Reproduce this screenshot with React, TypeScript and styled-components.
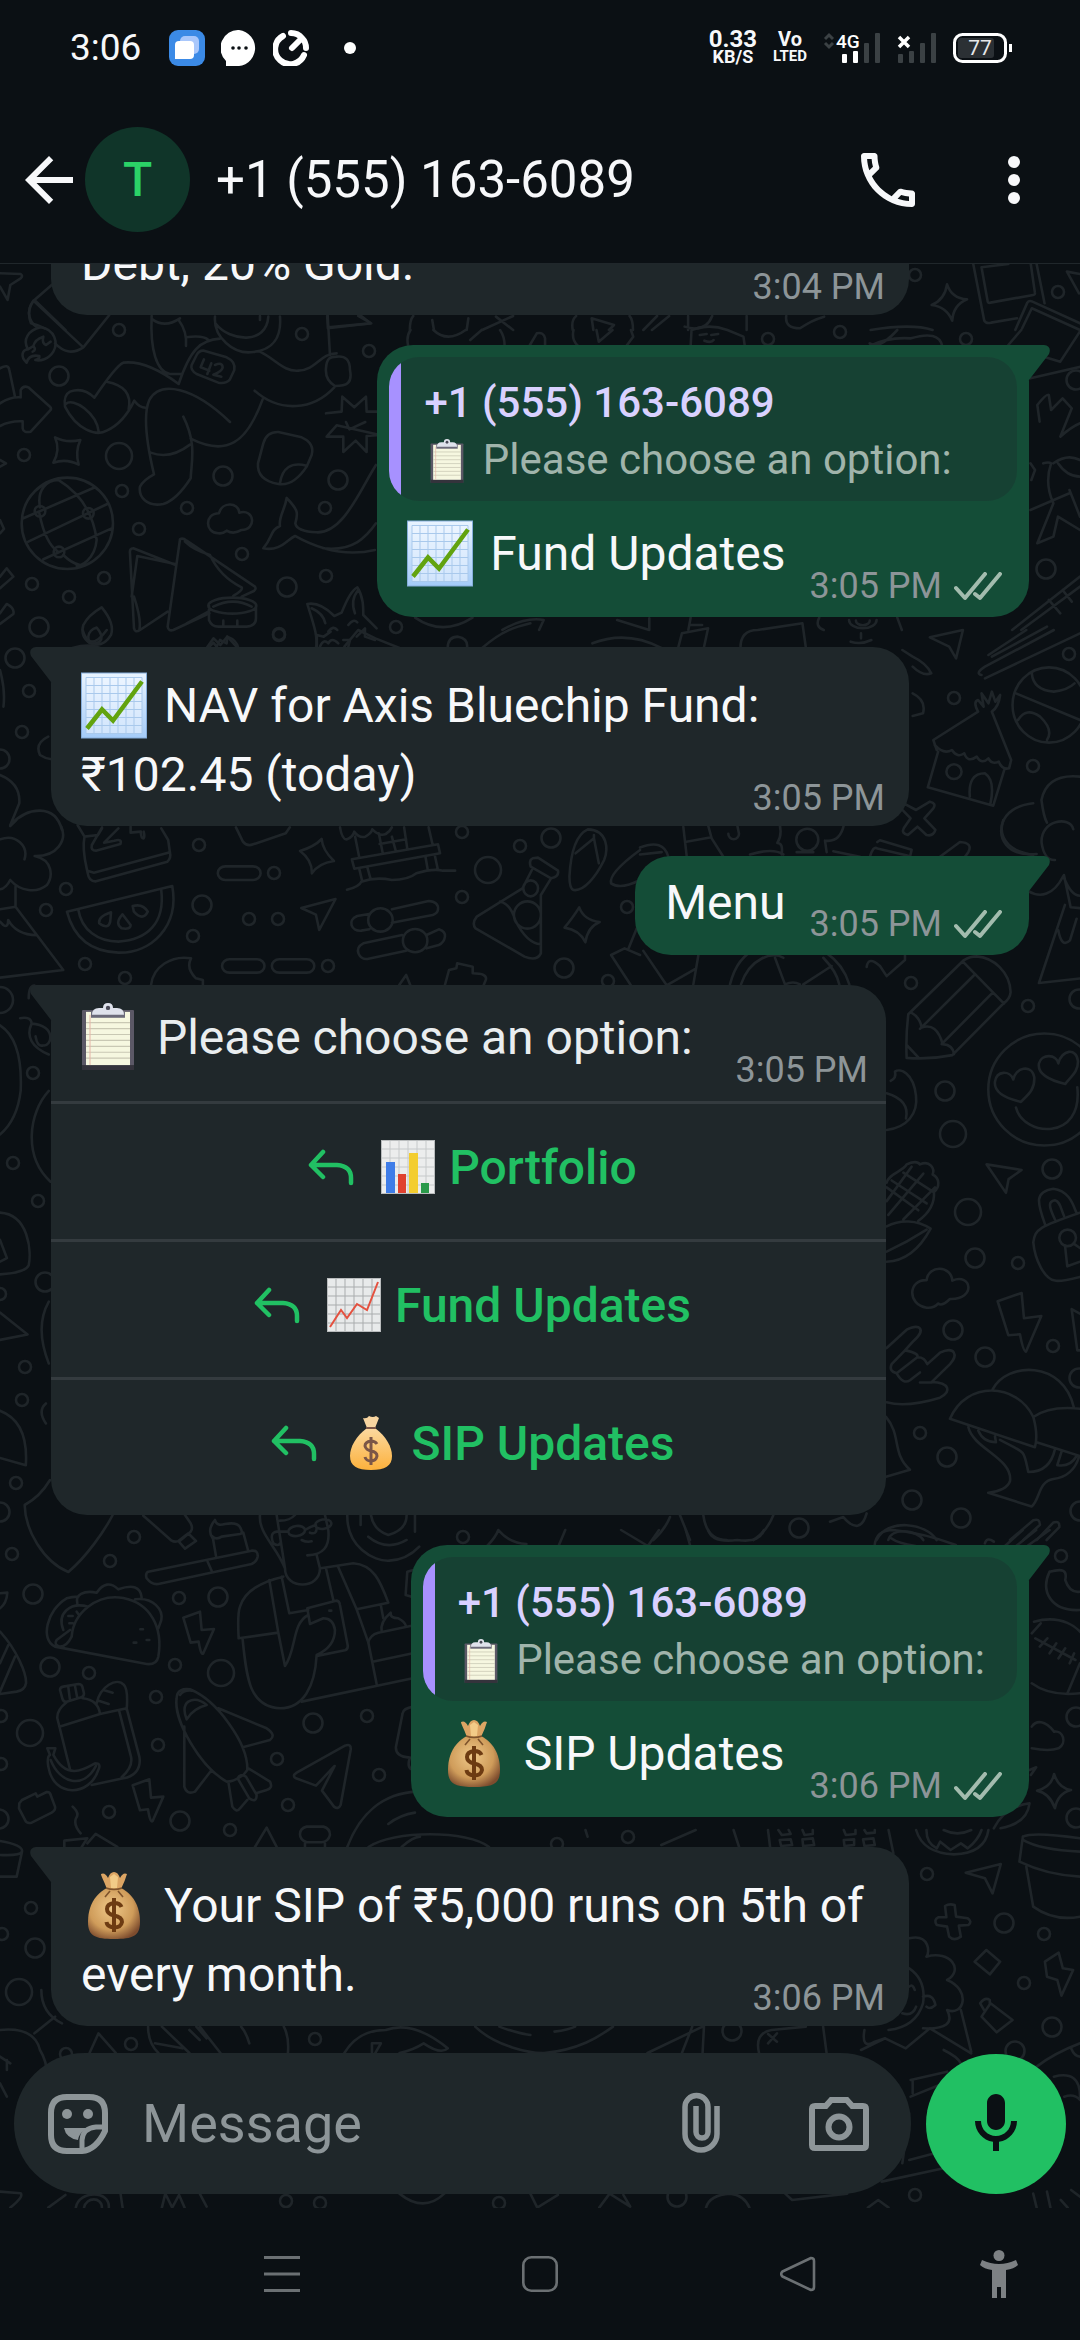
import React from 'react';
import styled, { createGlobalStyle } from 'styled-components';

const color = {
  page: '#0b1014',
  incoming: '#1f272a',
  outgoing: '#144d37',
  quote: '#164133',
  quoteBar: '#a791ff',
  text: '#f7f8fa',
  muted: '#8d9598',
  green: '#21c063',
  line: '#343b3f',
  doodle: '#1f2529',
  nav: '#6b7073',
};

const Global = createGlobalStyle`
  * { box-sizing: border-box; }
  html, body { margin: 0; padding: 0; background: ${color.page}; }
  body { font-family: Roboto, "Noto Sans", sans-serif; color: ${color.text}; }
  button { font: inherit; color: inherit; background: none; border: 0; padding: 0; cursor: pointer; }
  svg { display: block; flex: none; }
`;

const Page = styled.div`
  display: flex;
  flex-direction: column;
  height: 100vh;
  overflow: hidden;
`;

/* ---------- status bar ---------- */

const StatusBar = styled.div`
  display: flex;
  align-items: center;
  justify-content: space-between;
  height: 96px;
  flex: none;
  padding: 0 68px 0 70px;
`;

const StatusGroup = styled.div<{ $gap: number }>`
  display: flex;
  align-items: center;
  gap: ${p => p.$gap}px;
`;

const Clock = styled.time`
  font-size: 37px;
  line-height: 44px;
  margin-right: 12px;
`;

const Stack = styled.div<{ $top: number; $bottom: number }>`
  display: flex;
  flex-direction: column;
  align-items: center;
  font-weight: 700;
  line-height: 17px;
  font-size: ${p => p.$bottom}px;
  & > span:first-child { font-size: ${p => p.$top}px; }
`;

/* ---------- header ---------- */

const Header = styled.header`
  display: flex;
  align-items: center;
  height: 168px;
  flex: none;
  padding: 0 30px 0 13px;
  border-bottom: 1px solid #20272b;
`;

const Avatar = styled.div`
  display: grid;
  place-items: center;
  width: 105px;
  height: 105px;
  border-radius: 50%;
  background: #103529;
  color: #2bd367;
  font-size: 48px;
  font-weight: 500;
`;

const Title = styled.h1`
  flex: 1;
  margin: 0 0 0 26px;
  font-size: 51px;
  line-height: 60px;
  font-weight: 400;
`;

const IconButton = styled.button`
  display: grid;
  place-items: center;
  width: 72px;
  height: 72px;
  flex: none;
`;

const HeaderActions = styled.div`
  display: flex;
  gap: 54px;
`;

/* ---------- conversation ---------- */

const Chat = styled.main`
  position: relative;
  display: flex;
  flex-direction: column;
  flex: 1;
  min-height: 0;
  overflow: hidden;
`;

const Wallpaper = styled.svg`
  position: absolute;
  inset: 0;
  width: 100%;
  height: 100%;
`;

const Messages = styled.div`
  position: relative;
  display: flex;
  flex-direction: column;
  justify-content: flex-end;
  gap: 30px;
  flex: 1;
  min-height: 0;
  overflow: hidden;
  padding: 0 51px 27px;
`;

const Bubble = styled.article<{ $out?: boolean; $wide?: boolean }>`
  position: relative;
  flex: none;
  align-self: ${p => (p.$out ? 'flex-end' : 'flex-start')};
  width: ${p => (p.$wide ? '100%' : 'auto')};
  max-width: calc(100% - 120px);
  border-radius: 36px;
  background: ${p => (p.$out ? color.outgoing : color.incoming)};
`;

const TailShape = styled.svg<{ $out?: boolean }>`
  position: absolute;
  top: 0;
  ${p => (p.$out ? 'right: -21px;' : 'left: -21px; transform: scaleX(-1);')}
`;

const Received = styled.div`
  display: grid;
  padding: 24px 24px 7px 30px;
`;

const Sent = styled.div<{ $tall?: boolean }>`
  display: flex;
  align-items: flex-end;
  justify-content: space-between;
  gap: 24px;
  padding: ${p => (p.$tall ? '18px' : '12px')} 27px 10px 30px;
`;

const Text = styled.p<{ $space: number }>`
  grid-area: 1 / 1;
  margin: 0 0 ${p => p.$space}px;
  font-size: 48px;
  line-height: 69px;
`;

const Meta = styled.div`
  grid-area: 1 / 1;
  align-self: end;
  justify-self: end;
  display: flex;
  align-items: center;
  gap: 12px;
  font-size: 36px;
  line-height: 42px;
  color: ${color.muted};
  white-space: nowrap;
`;

const Emoji = styled.svg<{ $drop: number; $before: number; $after: number }>`
  display: inline-block;
  vertical-align: -${p => p.$drop}px;
  margin: 0 ${p => p.$after}px 0 ${p => p.$before}px;
`;

const Quote = styled.blockquote`
  margin: 12px 12px 0;
  padding: 17px 32px 13px 35px;
  border-radius: 30px;
  background: linear-gradient(to right, ${color.quoteBar} 12px, ${color.quote} 12px);
  font-size: 42px;
  line-height: 57px;
  color: #a0b4ab;
  & > cite { display: block; font-style: normal; font-weight: 500; color: #d9d1ff; }
  & > p { margin: 0; white-space: nowrap; }
`;

const Card = styled(Bubble)`
  width: 100%;
  max-width: calc(100% - 143px);
`;

const CardText = styled.div`
  display: flex;
  align-items: flex-end;
  justify-content: space-between;
  padding: 18px 18px 10px 30px;
  color: #e9edef;
`;

const Option = styled.button`
  display: flex;
  align-items: center;
  justify-content: center;
  gap: 14px;
  width: 100%;
  height: 138px;
  border-top: 3px solid ${color.line};
  padding: 0 0 9px 8px;
  color: ${color.green};
  font-size: 48px;
  font-weight: 500;
  & > svg:first-child { margin-right: 13px; }
`;

/* ---------- composer ---------- */

const Composer = styled.form`
  position: relative;
  display: flex;
  align-items: center;
  gap: 15px;
  padding: 0 14px 14px;
`;

const Field = styled.label`
  display: flex;
  align-items: center;
  flex: 1;
  min-width: 0;
  height: 141px;
  padding: 0 36px 0 28px;
  border-radius: 72px;
  background: ${color.incoming};
  color: ${color.muted};
`;

const FieldInput = styled.input`
  flex: 1;
  min-width: 0;
  margin: 0 0 0 28px;
  padding: 0;
  border: 0;
  outline: 0;
  background: none;
  color: ${color.text};
  font: 400 54px/62px Roboto, "Noto Sans", sans-serif;
  &::placeholder { color: ${color.muted}; opacity: 1; }
`;

const FieldActions = styled.div`
  display: flex;
  gap: 66px;
`;

const MicButton = styled.button`
  display: grid;
  place-items: center;
  width: 140px;
  height: 140px;
  flex: none;
  border-radius: 50%;
  background: ${color.green};
`;

/* ---------- system navigation ---------- */

const SystemNav = styled.nav`
  display: grid;
  grid-template-columns: 1fr 1fr 1fr;
  align-items: center;
  justify-items: center;
  height: 132px;
  flex: none;
  padding: 0 153px;
  position: relative;
`;

const AccessButton = styled.button`
  position: absolute;
  right: 45px;
  top: 30px;
  display: grid;
  place-items: center;
  width: 72px;
  height: 72px;
`;

/* ---------- small drawings ---------- */

const Tail = ({ out }: { out?: boolean }) => (
  <TailShape $out={out} width="57" height="36" viewBox="0 0 57 36" aria-hidden>
    <path d="M0 0H51Q59 1 56 9L36 35H25V12H0Z" fill={out ? color.outgoing : color.incoming} />
  </TailShape>
);

const Checks = () => (
  <svg width="48" height="29" viewBox="0 0 48 29" fill="none" stroke="#a3bcae" strokeWidth="4" strokeLinecap="round" strokeLinejoin="round" role="img" aria-label="Delivered">
    <path d="M2 16L11 26L31 2M21 22L26 26L46 2" />
  </svg>
);

const GreenChart = () => (
  <Emoji $drop={17} $before={0} $after={5} width="66" height="67" viewBox="0 0 66 66" role="img" aria-label="Chart">
    <defs>
      <linearGradient id="sky" x1="0" y1="0" x2="0" y2="1">
        <stop offset="0" stopColor="#e9f4ff" />
        <stop offset="1" stopColor="#a4cbf8" />
      </linearGradient>
    </defs>
    <rect x=".5" y=".5" width="65" height="65" fill="url(#sky)" stroke="#86aedb" />
    <rect x="5" y="5" width="56" height="56" fill="#f2f8ff" opacity=".55" />
    <path d="M5 5H61V61H5ZM13 5V61M21 5V61M29 5V61M37 5V61M45 5V61M53 5V61M5 13H61M5 21H61M5 29H61M5 37H61M5 45H61M5 53H61" fill="none" stroke="#a9c9ec" />
    <path d="M6 56L21 37L32 48L61 9" fill="none" stroke="#62a30f" strokeWidth="4.5" />
  </Emoji>
);

const SackRich = () => (
  <Emoji $drop={17} $before={0} $after={5} width="66" height="67" viewBox="0 0 66 67" role="img" aria-label="Money bag">
    <defs>
      <radialGradient id="sack" cx=".45" cy=".4" r=".65">
        <stop offset="0" stopColor="#efc889" />
        <stop offset=".65" stopColor="#cf9c5a" />
        <stop offset="1" stopColor="#7d4c2e" />
      </radialGradient>
    </defs>
    <path d="M26 17C23 9 20 4 20 2Q24 0 27 6Q29 0 33 0Q37 0 39 6Q42 0 46 2Q44 9 40 17Z" fill="#dca564" />
    <path d="M30 16L29 5L33 2L37 5L36 16Z" fill="#f2cb87" />
    <path d="M26 16H40C55 24 59 38 59 50C59 64 52 67 33 67C14 67 7 64 7 50C7 38 11 24 26 16Z" fill="url(#sack)" />
    <path d="M25 16Q33 19 41 16M29 19L24 25M37 19L42 25" stroke="#7e532c" strokeWidth="1.6" fill="none" />
    <path d="M40.500 35Q39 31 33 31Q26 32 26 37Q26 42 33 43.500Q41 45 41 50Q40 55.500 33 55.500Q26 55 25.500 50M33 26V60" fill="none" stroke="#6d3b12" strokeWidth="4" />
  </Emoji>
);

const Clipboard = ({ large }: { large?: boolean }) => (
  <Emoji $drop={large ? 16 : 9} $before={large ? 0 : 6} $after={large ? 10 : 8} width={large ? 54 : 34} height={large ? 67 : 44} viewBox="0 0 54 68" preserveAspectRatio="none" role="img" aria-label="Clipboard">
    <rect x="1" y="7" width="52" height="61" rx="1" fill="#5b5866" />
    <rect x="1" y="63" width="52" height="5" fill="#34333c" />
    <rect x="5" y="9" width="44" height="54" fill="#f6f7e0" />
    <path d="M5 20H49M5 26H49M5 32H49M5 38H49M5 44H49M5 50H49M5 56H49" stroke="#c9c8b4" strokeWidth="1.2" />
    <path d="M9 12V63" stroke="#e7b3a6" />
    <rect x="10" y="9" width="34" height="6" fill="#6b6a7a" />
    <path d="M11 12Q11 5 18 5H22Q22 0 27 0Q32 0 32 5H36Q43 5 43 12Z" fill="#dfe2ec" />
    <circle cx="27" cy="5" r="2.200" fill="#4a4a58" />
  </Emoji>
);

const ReplyArrow = () => (
  <svg width="46" height="37" viewBox="0 0 46 37" fill="none" stroke={color.green} strokeWidth="4.500" strokeLinecap="round" strokeLinejoin="round" aria-hidden>
    <path d="M15 3L3 16L15 28M3 16H29Q43 17 43 29V34" />
  </svg>
);

const BarChart = () => (
  <svg width="54" height="54" viewBox="0 0 54 54" role="img" aria-label="Bar chart">
    <rect width="54" height="54" fill="#eceded" />
    <path d="M9 0V54M18 0V54M27 0V54M36 0V54M45 0V54M0 9H54M0 18H54M0 27H54M0 36H54M0 45H54" stroke="#c6c9ca" strokeWidth="1" />
    <path d="M5 22H14V54H5Z" fill="#3f7de8" />
    <path d="M17 34H25V54H17Z" fill="#e0412f" />
    <path d="M28 13H37V54H28Z" fill="#f3cd2f" />
    <path d="M40 43H48V54H40Z" fill="#2a9a4a" />
    <rect x=".5" y=".5" width="53" height="53" fill="none" stroke="#b9bcbd" />
  </svg>
);

const LineChart = () => (
  <svg width="54" height="54" viewBox="0 0 54 54" role="img" aria-label="Rising chart">
    <rect width="54" height="54" fill="#e8eaea" />
    <path d="M9 0V54M18 0V54M27 0V54M36 0V54M45 0V54M0 9H54M0 18H54M0 27H54M0 36H54M0 45H54" stroke="#a9acad" strokeWidth="1" />
    <path d="M3 49L14 32L20 40L30 26L40 32L51 4" fill="none" stroke="#e4513f" strokeWidth="2" />
    <rect x=".5" y=".5" width="53" height="53" fill="none" stroke="#b9bcbd" />
  </svg>
);

const SackFlat = () => (
  <svg width="54" height="54" viewBox="0 0 54 54" role="img" aria-label="Money bag">
    <defs>
      <linearGradient id="flat" x1="0" y1="0" x2="0" y2="1">
        <stop offset="0" stopColor="#fbd9a0" />
        <stop offset="1" stopColor="#fcb13c" />
      </linearGradient>
    </defs>
    <path d="M23 12L19 2Q23 3 25 0Q29 2 32 0L35 2L31 12Z" fill="#f7d5a0" />
    <path d="M23 12H31C42 20 48 31 48 40C48 50 41 54 27 54C13 54 6 50 6 40C6 31 12 20 23 12Z" fill="url(#flat)" />
    <path d="M22 12H32" stroke="#7b5647" strokeWidth="2" />
    <path d="M33 28Q31 25 27 25Q21 26 21 30Q22 34 27 35Q33 36 33 40Q32 45 27 45Q22 45 21 41M27 21V49" fill="none" stroke="#7b5647" strokeWidth="3" />
  </svg>
);

/* ---------- wallpaper ---------- */

const smallDots = [
  [119, 330], [302, 334], [369, 351], [24, 455], [122, 491], [187, 508], [139, 529], [325, 508], [242, 554], [326, 576],
  [32, 584], [69, 597], [104, 578], [279, 634], [911, 983], [1028, 1006], [1018, 1263], [1053, 1346], [920, 1433],
  [16, 1483], [12, 1554], [134, 1537], [110, 1561], [179, 1598], [89, 1673], [175, 1665], [156, 1697], [158, 1745],
  [277, 1759], [367, 1716], [379, 1775], [288, 1805], [230, 1830], [109, 1812], [1, 1716], [1, 1764],
  [199, 845], [66, 889], [46, 910], [193, 936], [85, 964], [125, 978], [274, 873], [249, 919], [278, 919], [328, 966],
  [462, 832], [520, 846], [462, 897], [627, 907], [608, 981], [1069, 654], [954, 698], [1033, 766], [29, 691], [22, 732],
  [279, 635], [768, 339], [840, 332], [966, 339], [396, 627], [915, 275], [1058, 292], [31, 1908], [131, 2044], [66, 2054],
  [315, 2039], [557, 1844], [628, 1837], [927, 1874], [1044, 1934], [1024, 1983], [915, 2195], [286, 2201], [320, 2203],
  [499, 2203], [2, 1934], [33, 1073], [13, 1163], [38, 1201], [25, 1367], [22, 1400], [0, 1294], [1061, 1556], [463, 1537],
];
const mediumDots = [
  [59, 376], [223, 476], [338, 480], [287, 587], [39, 627], [945, 1091], [1052, 1169], [975, 1258], [953, 1330], [985, 1357],
  [947, 1457], [912, 1500], [961, 1518], [799, 1528], [1079, 999], [1079, 1378], [1080, 1511], [0, 1512], [33, 1594],
  [218, 1597], [50, 1667], [313, 1723], [180, 1821], [-1, 1819], [202, 905], [551, 838], [564, 968], [15, 658], [0, 759],
  [1076, 380], [1046, 569], [35, 1948], [732, 2031], [1004, 1923], [1052, 2027], [1015, 2051], [677, 2197], [45, 1282],
  [1076, 1717], [1076, 1818],
];
const largeDots = [[119, 456], [953, 1134], [968, 1212], [221, 1673], [30, 1733], [488, 870], [19, 1992], [0, 1000]];

type Sheet = { at: string; paths: string[] };

const sheets: Sheet[] = [
  {
    at: 'translate(0 0) scale(.3444 .3333)',
    paths: [
      'M0 820L60 822Q68 828 60 835L30 855L22 900L0 860M150 855L100 900L190 990M100 900Q75 930 90 970Q110 975 130 985',
      'M1190 990Q1190 960 1200 948M1255 960L1260 990M1360 955L1355 990M1440 950L1490 990M1490 948L1400 990M950 948L952 985L1078 970L1040 948',
    ],
  },
  {
    at: 'translate(540 0) scale(.3444 .3333)',
    paths: [
      'M1182 853Q1195 895 1240 898Q1200 915 1197 962Q1180 920 1137 915Q1175 900 1182 853Z',
      'M1258 792L1290 962Q1295 972 1310 968L1385 955M1282 802L1300 905Q1302 910 1308 908L1432 885Q1438 884 1437 878L1425 792M1282 802L1360 792M1442 792L1465 910M1380 990L1415 908Q1420 900 1430 905L1568 970M1400 985L1428 925L1568 990M1530 815L1568 822M1530 815L1565 880',
      'M95 990Q90 960 105 948M270 990Q270 960 260 948M155 990L150 955L215 975L200 990M300 990L340 948M325 990L375 948M430 990V948M600 990V948M420 980Q480 1000 500 948M715 948Q710 985 755 985Q790 960 825 950M960 990Q1080 970 1140 990',
    ],
  },
  {
    at: 'translate(0 300) scale(.3333)',
    paths: [
      'M100 2L250 142L328 45M100 2C75 35 90 70 112 82M165 130C190 155 215 165 250 142',
      'M80 188C60 170 66 150 84 148C66 118 86 90 122 82C165 88 175 130 160 155C146 178 120 184 106 180Q120 176 118 168C96 164 84 172 80 188ZM84 148L100 138Q110 150 98 155M100 138Q105 118 130 110Q125 130 138 135L152 125',
      'M455 48C450 150 470 215 510 222H545M457 58Q495 85 540 55M536 60Q562 95 558 138M558 112Q610 105 625 120M660 116C600 120 570 150 536 252Q440 180 370 188Q350 195 283 293Q250 260 210 275Q190 285 195 320C230 390 290 410 320 392Q370 370 403 302Q420 325 440 323M320 245Q400 260 386 328M197 312C220 290 290 340 296 395',
      'M462 523C440 430 430 340 448 300C480 240 580 260 690 366M550 350C590 430 575 480 572 535Q530 600 490 612C440 622 415 590 420 560Q430 540 462 523M452 458Q510 480 570 434M572 416C680 470 740 430 788 298M764 272C840 340 940 330 1003 262',
      'M645 50C640 110 700 165 760 156C820 150 845 110 840 50M648 72C690 125 800 135 805 50M780 155C830 180 850 215 895 212C950 210 960 160 1010 160M1010 170Q1050 165 1050 210C1058 250 1040 258 1005 258Q975 240 978 205C980 175 990 170 1010 170M780 48V60',
      'M612 152L680 172Q708 185 703 210L690 238Q678 252 655 248L590 222Q570 210 575 195L590 165Q598 150 612 152ZM612 178L602 202L628 212M634 190L622 222M645 195Q668 185 668 203Q665 215 640 224L664 230',
      'M983 45L990 165M985 82L1112 70L1080 45',
      'M978 340L1025 335L1027 290L1063 322L1098 290L1100 335L1140 335M1140 405L1100 408L1100 456L1067 422L1030 456V410L980 410L1010 376ZM1038 366L1048 388L1096 366',
      'M835 396L905 412Q945 430 935 465L920 500Q880 560 835 552Q770 540 774 490L790 430Q800 395 835 396ZM920 497Q850 480 840 550',
      'M165 412Q200 430 241 420Q225 455 236 494Q200 475 160 488Q182 450 165 412Z',
      'M0 310Q30 290 62 292V270Q70 255 85 262L150 320Q156 326 150 332L92 395Q70 400 68 385V364Q30 362 0 378',
      'M65 670A137 137 0 1 0 339 670A137 137 0 1 0 65 670M120 622C110 570 140 540 175 540C240 580 280 640 290 720C285 780 240 800 230 798M118 640C130 700 150 740 175 756M70 655L285 562M85 725L322 612M130 778L335 685M190 765Q215 790 240 795',
      'M104 634A16 16 0 1 0 136 634A16 16 0 1 0 104 634M249 640A16 16 0 1 0 281 640A16 16 0 1 0 249 640M161 756A16 16 0 1 0 193 756A16 16 0 1 0 161 756',
      'M412 768L395 890M412 768L525 792M527 795L400 745Q388 745 390 760L402 985Q405 1000 420 990L503 935M402 890Q425 960 418 990M540 718Q548 712 560 722L765 860Q770 868 760 874L725 890M540 718L503 980Q505 995 520 990L628 940M555 725Q580 750 630 765Q660 830 725 862Q730 870 700 888M560 970L625 935',
      'M625 917A72 24 0 1 0 769 917A72 24 0 1 0 625 917M627 917V960Q635 980 655 980H740Q768 978 768 955V917M670 962V978M712 962V978M640 920Q700 890 755 920',
      'M655 700C615 700 612 640 657 640C665 605 715 605 718 638C765 625 770 690 725 690Q700 705 680 692Q668 702 655 700Z',
      'M1128 495C1080 570 1030 700 950 697Q890 695 886 670C895 640 895 630 860 594C855 630 835 650 840 678C810 690 820 710 790 745C840 755 860 720 885 708C960 750 1040 770 1125 750M970 745C1060 755 1100 710 1128 670',
      'M948 1044C955 1010 940 970 922 912Q960 905 1003 948L1025 938C1040 900 1055 870 1072 862C1090 890 1090 920 1090 945L1130 985M935 925Q970 940 976 970M1065 940Q1050 900 1075 870M985 995Q1000 975 1012 990M1045 975Q1060 955 1072 967M960 1040Q970 1015 985 1030Q995 1010 1015 1030M1030 1020L1050 1020L1045 1040M1070 1010L1095 985L1095 1010L1125 1020',
      'M305 922Q345 970 333 1005Q310 1045 270 1030Q240 1010 250 975Q265 945 305 922ZM290 983C260 990 255 1030 285 1030C315 1025 305 1000 290 983Z',
      'M0 830L20 805L40 830L0 865M0 940L20 912Q45 925 40 942L0 972M0 205Q25 190 28 210L45 290M0 480L18 490L0 500M0 660L12 687L0 700',
      'M625 1044L640 1028L650 1040L660 1020L680 1030L682 1010Q710 1020 715 1044',
    ],
  },
  {
    at: 'translate(360 330) scale(.4592 .3333)',
    paths: [
      'M105 48Q100 20 110 0M315 48Q315 20 305 0M160 0Q190 40 230 0M240 30L265 0M370 45L385 10Q400 5 403 25V45M465 0Q460 30 475 48M515 0L520 35L550 0M590 0L595 20L580 48',
      'M720 48L722 0Q760 -20 800 0L835 20L838 48M740 15L755 12M765 15L780 12M750 32Q765 40 770 30M1110 48Q1150 20 1200 25Q1260 0 1268 48M1110 40Q1130 60 1170 0M1410 48L1440 0M1525 95L1570 0M1440 60L1525 95M1460 145L1570 110',
      'M1480 275L1475 225Q1495 190 1500 195L1505 240L1530 205L1550 235L1525 320Q1550 290 1568 280M1460 400L1470 420L1462 450M1488 400Q1500 395 1505 400Q1490 460 1510 520L1475 640L1510 620L1520 560L1568 600M1510 400Q1540 370 1568 390M1520 400Q1540 440 1568 440M1545 480L1568 560M1460 540L1545 490',
      'M120 863Q180 920 245 863M310 900Q360 860 400 870L390 900M560 870L630 900V865M1420 900L1568 740M1440 900L1568 770M1500 810L1525 850M1530 780L1550 815M715 900L720 863M720 885H745M1000 863Q990 890 1010 900M1065 870A30 25 0 1 0 1125 870M1080 872A15 14 0 1 0 1110 872M1170 863L1180 900',
    ],
  },
  {
    at: 'translate(0 630) scale(.6888 .3333)',
    paths: [
      'M460 54V15L470 20L480 5M500 50L520 0L545 25L580 54M300 54L310 25L320 45L330 20L345 54M650 54Q650 20 665 20Q680 25 678 54M700 54C730 0 750 -10 770 -20M860 40Q910 0 960 54M985 50L990 10L1028 -5L1022 52M1075 54Q1075 0 1100 0L1165 -20L1170 54M120 0Q130 70 155 0M105 54Q130 40 145 54',
      'M1350 22L1398 0L1388 85L1378 50ZM1435 75L1490 0M1440 80L1520 -10M1425 135Q1415 130 1430 110L1530 0M1430 145L1568 10M1310 60L1325 80Q1345 100 1352 130Q1340 140 1325 110M1325 190Q1345 210 1340 250L1325 258M1235 35Q1250 45 1265 30M1250 25V10',
      'M1470 225A53 113 0 1 0 1576 225A53 113 0 1 0 1470 225M1475 190L1568 270M1498 130Q1500 180 1530 185Q1550 180 1560 160M1478 270Q1490 230 1510 260Q1530 300 1520 330',
      'M1420 245L1355 330L1360 360M1440 245L1468 390L1465 415Q1455 420 1450 395Q1440 405 1435 385Q1425 405 1418 380Q1405 400 1400 370Q1390 385 1382 360Q1370 375 1357 345M1362 365L1347 472L1442 527L1458 420M1408 500Q1405 430 1430 430Q1445 450 1438 520M1420 245Q1412 215 1420 210L1428 230L1425 190L1435 220L1440 185L1445 215L1452 195Q1450 230 1440 245M1374 425A11 22 0 1 0 1396 425A11 22 0 1 0 1374 425',
      'M1312 520L1330 540L1350 515Q1360 520 1355 535L1342 565L1358 600Q1355 620 1345 615L1332 590L1318 615Q1308 610 1312 595L1322 565L1308 535Z',
      'M1568 440Q1520 430 1512 510Q1515 560 1520 578M1500 520C1450 530 1440 620 1475 660Q1485 670 1500 675',
      'M0 435Q30 460 28 520L15 585C40 530 80 520 90 600M70 320Q50 340 58 375Q65 385 75 388M0 120Q8 180 5 230',
    ],
  },
  {
    at: 'translate(0 820) scale(.4082 .3333)',
    paths: [
      'M25 18L40 0M150 20C165 60 140 110 85 108M60 118C70 80 40 40 0 58M85 108C130 120 130 170 115 195C90 220 50 215 25 180Q15 205 0 208M38 200V260L155 450L0 473M0 268L38 260M0 305L8 315Q20 325 20 300Q40 345 90 346',
      'M190 15L207 50C200 90 210 130 215 160Q218 185 235 184L410 125Q420 115 416 95L412 60L395 25M216 153L230 158L412 98M207 50L240 45L250 25M250 22L225 75Q222 92 235 92L295 72Q300 55 280 62L255 68L290 25M320 20V38L345 35Q345 55 352 55Q355 50 352 35',
      'M578 22L595 65Q605 80 620 73L700 40L710 22',
      'M735 93Q770 80 788 57Q790 90 818 123Q780 130 764 160Q765 120 735 93ZM1383 323Q1405 290 1419 262Q1430 300 1469 306Q1440 320 1434 367Q1420 330 1383 323Z',
      'M552 139H620A18 20 0 0 1 620 180H552A18 20 0 0 1 552 139ZM562 418H630A18 20 0 0 1 630 458H562A18 20 0 0 1 562 418ZM684 418H752A18 20 0 0 1 752 458H684A18 20 0 0 1 684 418Z',
      'M164 275L422 198C440 320 370 400 290 398C220 395 180 350 164 275ZM192 270C200 330 240 365 290 365C360 360 405 310 395 210M272 277Q240 290 243 310Q265 330 270 305ZM300 283Q280 310 298 325Q320 330 320 315ZM325 258Q350 250 362 275Q350 305 328 275Z',
      'M738 264L822 237L782 330L774 284Z',
      'M833 22Q838 60 850 58Q865 50 868 35Q880 55 895 50Q910 40 912 28Q930 50 945 42Q955 35 960 22M870 50L880 112M1050 22L1060 75M862 118L1073 73L1078 100L868 146ZM928 40L938 102M960 50L970 95M990 22L998 88M930 72L995 58M880 146L887 182M900 142L908 178M1042 108L1048 150M1065 105L1072 145M850 209Q880 200 885 185Q920 170 960 180Q1000 180 1020 160Q1060 145 1085 152H1115',
      'M904 282L875 288C850 300 860 335 885 332L905 328M960 268L1050 243Q1075 245 1073 268Q1072 280 1060 285L960 308M985 345L890 370C865 385 880 420 900 417L995 392M1045 345L1075 328Q1092 335 1090 350Q1088 368 1075 375L1045 385M902 300A30 35 0 1 0 962 300A30 35 0 1 0 902 300M987 362A30 35 0 1 0 1047 362A30 35 0 1 0 987 362',
      'M1305 115Q1295 120 1300 140L1350 175Q1370 170 1367 152L1318 113ZM1303 150L1280 205L1168 290Q1155 310 1165 325L1285 410Q1315 425 1325 400V225L1350 175M1225 245Q1250 250 1262 300Q1290 370 1325 373M1282 205A18 24 0 1 0 1318 205A18 24 0 1 0 1282 205M1259 285A33 41 0 1 0 1325 285A33 41 0 1 0 1259 285',
      'M1395 170Q1400 50 1440 28C1490 30 1490 90 1480 120C1460 170 1430 215 1405 210Q1395 205 1395 170M1410 100L1455 55L1467 130M1455 45V60M1568 90Q1490 160 1497 190Q1520 210 1568 180',
      'M370 495C375 440 420 405 468 415Q455 445 480 475L497 480V495M978 495L995 465L1005 495M1090 495L1100 450L1118 445L1120 430L1158 440V460Q1195 460 1190 480L1185 495M1568 405L1530 385L1497 405L1545 495M1540 385L1560 325',
    ],
  },
  {
    at: 'translate(640 820) scale(.3333 .4592)',
    paths: [
      'M805 423L972 305Q990 297 1010 297C1060 300 1110 330 1112 375Q1110 390 1090 400L937 512Q870 522 800 518Q797 470 805 423ZM968 308L1092 400M1005 336L840 455M1058 376L905 488M815 420Q840 430 845 452Q890 440 908 488Q940 490 942 510M800 490L835 517',
      'M1045 587A168 122 0 1 0 1381 587A168 122 0 1 0 1045 587M1143 614Q1060 600 1065 570C1070 545 1110 545 1120 565C1125 540 1175 530 1183 560C1185 590 1160 600 1143 614ZM1276 575Q1190 560 1197 530C1205 508 1250 510 1255 530C1265 500 1310 495 1314 525C1315 550 1290 560 1276 575ZM1128 626C1150 690 1330 700 1312 582',
      'M1040 750L1145 762L1106 782L1098 812Z',
      'M1180 920C1185 890 1200 885 1320 855M1180 920C1185 960 1215 1000 1245 1003Q1260 1006 1320 995M1215 880C1190 830 1185 810 1240 803C1290 808 1300 840 1310 856M1245 870C1225 840 1225 830 1245 828C1260 830 1262 845 1272 862M1258 910A25 18 0 1 0 1308 910A25 18 0 1 0 1258 910M1275 926L1282 972L1320 962M1300 922L1320 932',
      'M740 790C745 770 790 765 800 750Q830 740 840 750C870 740 885 760 878 772C900 780 900 800 882 810C885 840 860 860 835 873M740 800L835 850M755 785L860 835M790 768L880 810M745 860L850 770M740 830L815 755M790 870L885 800M740 885C780 870 830 870 872 890Q820 960 740 962M740 940Q800 920 860 892',
      'M740 675C800 670 835 640 828 600C820 550 780 540 765 548Q770 562 752 568M740 595Q810 610 798 650',
      'M860 1062C800 1055 805 1000 860 1002C865 968 935 970 937 1003C995 985 1010 1045 930 1043Q905 1060 895 1053Q880 1064 860 1062Z',
      'M1073 1048L1145 1030L1152 1085L1204 1080L1158 1158Q1150 1158 1140 1120L1105 1122ZM1320 1075L1295 1065L1312 1155L1320 1155',
      'M740 1150L800 1110C840 1095 860 1110 820 1135L795 1155C830 1160 835 1165 832 1170C850 1170 855 1175 862 1185L900 1160C945 1145 955 1165 930 1185L875 1224C930 1225 935 1245 900 1258Q800 1280 740 1268M795 1155L755 1185Q745 1200 770 1205L832 1170M770 1205Q790 1230 810 1220L840 1203M840 1225H875',
      'M930 1304C980 1220 1130 1225 1180 1300Q1195 1340 1185 1366L930 1304ZM1058 1240C1100 1180 1270 1175 1302 1280M1180 1300Q1230 1275 1320 1282M1190 1355L1320 1385M985 1322C1000 1370 1120 1390 1110 1440Q1100 1460 1045 1465L1175 1495C1200 1480 1195 1440 1240 1435Q1300 1430 1318 1385M1015 1330Q1030 1355 1068 1355L1065 1342M1080 1350C1160 1380 1150 1370 1165 1420Q1230 1420 1245 1370M1265 1375L1252 1405Q1290 1410 1310 1385',
      'M738 1300C785 1340 755 1380 810 1415L738 1430',
      'M710 1568C740 1520 860 1530 890 1568M745 1568C755 1540 830 1545 850 1568M1110 1568L1180 1525Q1200 1520 1200 1535L1150 1568M1190 1568L1240 1530Q1260 1525 1258 1540L1220 1568M570 1528L610 1518Q660 1560 680 1510M190 1514Q200 1568 260 1568M400 1514Q380 1550 340 1568M120 1514L150 1568M90 1518Q75 1545 40 1568',
      'M1090 0C1070 40 1100 80 1190 74M1205 50C1200 0 1290 -10 1300 20M1205 50C1210 75 1225 88 1245 87M1165 155C1200 170 1240 165 1270 122C1290 160 1310 165 1320 165M1272 120L1292 190L1320 192M1275 185L1197 355L1320 345M1255 240Q1265 280 1290 262L1310 215',
      'M712 48L720 44L815 65L810 80M712 62L805 78M690 80Q700 55 712 62M900 80L960 48Q1000 50 985 70L975 80M0 60Q70 40 85 80M0 75L65 70M130 15L140 78M200 0L215 40L250 80M135 48L210 38M330 75Q400 60 430 75M469 43A33 24 0 1 0 535 43A33 24 0 1 0 469 43M415 0Q430 30 412 50Q430 50 425 75M612 10Q600 50 555 45L560 70M470 70H520M580 68L660 80M265 30A16 12 0 1 0 297 30L290 5',
      'M270 358C300 270 400 260 450 290M303 358C330 300 400 285 430 300M405 300L435 358M490 358L575 318M560 290Q610 315 628 358M550 300Q590 330 598 358M10 285L80 360L165 325M175 295L160 358M680 320Q685 295 720 318L740 340L795 305V295M435 358Q460 350 480 358',
    ],
  },
  {
    at: 'translate(0 960) scale(.574 .3635)',
    paths: [
      'M35 160Q55 155 55 175C100 180 90 240 75 235Q65 240 62 210M55 175C45 210 55 240 85 260M85 360C50 420 40 540 88 610M0 180Q40 220 36 360Q30 440 0 480M0 695C50 700 55 800 50 840Q45 860 0 865M0 770L12 820L0 830M0 970L48 1030L0 1045M85 940Q60 1010 85 1110M80 1220Q65 1240 80 1275M0 1240Q50 1270 45 1390L0 1370M50 105Q50 70 60 70',
    ],
  },
  {
    at: 'translate(0 1480) scale(.3333)',
    paths: [
      'M150 0Q120 50 74 75C75 150 130 245 205 276C260 230 315 150 338 105',
      'M430 107L515 182Q525 188 540 182L572 155Q580 145 572 130L555 105M535 183L565 160L588 183L555 206Z',
      'M445 275L755 212Q775 210 773 230Q770 245 755 252L475 312Q455 315 440 295Q435 280 445 275ZM623 245L635 272M648 228L638 170M744 210L730 158M638 175Q620 150 645 120Q650 140 675 132Q715 125 722 145Q730 160 720 162L665 170Q650 180 638 170',
      'M165 500C120 480 140 390 200 355Q215 350 235 350M165 500L440 552Q470 555 475 530C490 440 450 370 370 354C290 340 220 400 215 470Q200 500 180 500Q160 495 170 480L210 450M232 370C225 345 250 330 290 338Q320 295 355 328Q420 305 425 352M405 358C460 350 490 390 484 420L475 445M190 450C170 400 210 365 265 380M205 408H218M208 430H218M230 395L235 402',
      'M421 448H429M440 480H448M401 488H409M988 392H994',
      'M550 413L600 395L605 450L642 447L610 520Q603 528 596 485L572 488ZM398 916L448 898L453 953L490 950L458 1023Q451 1031 444 988L420 991Z',
      'M180 630Q180 622 190 620L235 612Q245 612 247 620L252 640Q252 650 244 652L200 665Q190 667 187 655ZM205 622L210 660M225 618L232 655M200 667Q170 690 172 715L210 868M248 655Q295 660 300 702L178 740M290 670C300 620 350 590 372 615Q385 630 380 690M300 702L380 685L418 830C425 870 400 890 370 895L275 915M358 695L393 830Q400 860 365 892M310 630L338 638M296 662L326 672',
      'M142 805H166L160 825C200 900 250 870 285 850Q305 850 295 870C270 950 160 955 145 860Q140 830 150 825ZM152 840C180 910 250 930 288 858',
      'M530 655C530 630 550 625 570 628C650 660 745 790 742 870L730 885C700 905 690 905 680 905C600 860 520 720 530 655ZM560 718Q545 680 565 665Q590 650 620 675Q580 685 560 718M655 685L800 745Q830 765 810 780L728 802M553 740V920Q560 945 585 935L635 870M685 905L697 980Q710 1000 720 985L742 960M745 865L810 905Q820 925 800 930L768 940M713 895L748 955Q770 970 770 945L738 890Q720 880 713 895M540 645Q550 630 575 632',
      'M890 878L1035 797Q1055 790 1052 810L1022 975Q1015 990 1002 980L966 932L1004 858L948 917L888 895Q875 888 890 878Z',
      'M780 105C775 160 830 200 855 265M830 105L855 265C855 330 960 330 960 265L950 225M975 105L985 150C990 200 970 225 922 226M840 190Q835 200 820 190C810 165 815 150 850 155L865 155M915 150Q930 140 948 135M905 180Q920 188 935 184M930 158Q950 165 950 145M865 156A25 15 -8 1 0 915 150A25 15 -8 1 0 865 156M946 136A24 14 -8 1 0 994 129A24 14 -8 1 0 946 136M840 122Q870 122 885 105',
      'M850 290Q740 315 720 380Q712 400 716 475L835 458M808 300L835 458L855 558C890 510 875 430 925 405M845 290L868 400L925 390M962 265L1060 250C1120 255 1140 300 1165 368L1070 388L1015 262M978 265L1000 360M1070 388L1105 487M1143 378L1150 415M728 478C740 600 750 680 840 685C910 685 945 620 950 525Q1005 500 1005 450Q1000 415 970 415L930 432L922 385L1008 362Q1018 362 1020 375L1043 495Q1045 508 1035 511L955 527',
      'M905 665L1260 590M1105 487L1130 612M1105 487Q1110 465 1135 458L1260 432M1118 545L1260 515M1145 455Q1140 425 1172 398Q1170 415 1195 415Q1215 425 1218 438',
      'M1042 105C1040 200 1120 245 1168 242Q1220 240 1258 200M1082 105V135M1105 170Q1160 215 1220 180M1113 105Q1120 150 1165 165Q1220 150 1220 105M1245 105V155',
      'M1240 270L1222 275L1217 345L1240 352M1240 680Q1210 685 1208 700L1188 800Q1185 830 1230 833Q1220 860 1235 868M1042 1101C1080 1000 1150 940 1250 935M1165 1032Q1200 1005 1245 998M1205 1101Q1240 1070 1260 1070',
      'M0 455C50 510 80 580 78 610Q75 630 50 635L0 642M0 550L25 495M0 635L45 530M0 340L22 338Q20 370 0 385',
      'M58 970L66 960L107 940L112 950L140 936Q150 935 152 945L165 980Q168 990 155 998L95 1028Q80 1032 75 1020L57 985Z',
      'M218 980Q240 1000 228 1015Q220 1035 242 1060M193 1101V1082L262 1075L245 1101M262 1090L287 1062L352 1101M765 1101L800 1043L830 1101M920 1040H970Q990 1045 990 1065Q985 1085 965 1087H920Q900 1080 900 1063Q900 1045 920 1040M915 1090V1101M975 1090V1101M0 1083Q70 1095 66 1115L50 1190H0M0 1125Q60 1128 66 1115',
    ],
  },
  {
    at: 'translate(380 1530) scale(.4464 .3333)',
    paths: [
      'M240 48Q260 20 265 0Q290 40 328 42M400 48L415 0M540 0L600 48L625 0M695 48L685 0M735 0Q745 40 800 30Q850 40 860 0M1108 48Q1110 0 1150 0Q1220 10 1290 45M1145 25Q1160 40 1200 48M1355 40Q1360 20 1375 35M1400 48L1440 0M1425 48L1470 0M1450 48L1500 0',
      'M1500 125C1480 180 1500 245 1568 240M1500 125C1530 115 1540 120 1535 150Q1545 190 1568 185',
      'M1465 275C1520 255 1568 280 1590 350M1460 460Q1500 500 1568 490M1468 325L1558 390M1478 350L1495 325M1500 370L1515 340M1520 385L1535 355M1545 400L1555 370M1540 490L1568 400M1460 310L1480 280',
      'M1460 655Q1500 665 1520 655C1540 640 1530 600 1510 605C1490 570 1470 570 1460 590',
      'M1510 732Q1520 775 1548 780Q1518 790 1512 835Q1500 790 1472 782Q1505 770 1510 732Z',
      'M1375 895Q1400 830 1455 820Q1450 880 1390 895M1455 720L1470 712L1458 735',
    ],
  },
  {
    at: 'translate(0 1830) scale(.6888 .3333)',
    paths: [
      'M535 51C570 0 680 0 710 51M850 0L853 20M1010 0L960 45M1065 0L1073 51M1115 0L1118 51M1290 0L1297 70M1130 0L1135 15L1148 12L1145 0M1165 0L1168 15L1180 12V0M1132 30L1148 28L1150 45L1134 48ZM1165 28L1180 25L1182 45L1166 48ZM1225 0L1228 15L1242 12V0M1255 0L1258 10L1270 8V0M1225 30L1240 28V45L1226 48ZM1253 28L1268 25L1270 45L1255 48ZM1330 0Q1340 70 1385 73Q1430 70 1435 0M1345 0Q1345 40 1360 55L1365 35L1380 60L1395 40L1405 55Q1420 30 1425 0M1370 0Q1390 20 1410 0',
      'M1485 20Q1500 5 1568 25M1485 20L1480 95Q1520 135 1568 140M1490 110L1500 230Q1530 275 1568 260M1485 30Q1510 60 1568 65',
      'M1402 128L1453 102L1441 190L1430 145Z',
      'M1372 228Q1378 220 1386 225L1388 260L1405 265Q1412 275 1406 285L1392 287L1395 320Q1385 335 1378 320L1375 290L1360 285Q1355 270 1362 262L1374 262Z',
      'M1432 360L1452 395L1437 433L1415 395ZM1438 520L1470 570L1447 607L1425 560ZM1430 545L1423 520Q1430 500 1437 510V520',
      'M1517 395L1537 368L1543 415L1558 420L1541 497L1535 450L1520 440Z',
      'M1320 325C1350 310 1350 370 1345 380C1380 360 1400 420 1375 450C1410 480 1400 560 1375 540Q1390 600 1340 595M1320 415Q1345 450 1340 520Q1330 590 1290 600M1340 500Q1355 490 1358 525Q1350 540 1345 530M1320 470Q1325 460 1328 480M1310 550Q1325 560 1330 530M1395 540L1410 665M1255 600Q1250 660 1270 635L1285 625L1315 655L1350 595L1410 670M1250 660L1285 625M1370 660Q1390 680 1395 700M1505 710Q1530 670 1568 640M1555 655Q1560 680 1568 680',
      'M0 600Q50 590 58 660Q70 700 68 750M0 680L15 700M10 690V720M0 760L10 800M60 480Q60 550 90 580M50 610L80 560',
      'M215 590Q215 640 230 669M235 590L275 669M225 640L265 655M275 600L290 630M285 590L300 625M130 669L143 610L168 669M290 590L320 669M350 590Q358 610 362 640M418 669Q420 620 412 590M500 669Q520 600 560 600Q600 570 650 655Q640 675 615 640Q600 660 580 669M540 669V640H553L545 669M690 590C720 650 770 670 790 669C840 660 870 620 890 590M725 590Q750 610 770 615M805 605Q825 600 835 590M940 669L1020 590M990 669L1005 590M1020 669L1022 590M1102 669Q1095 610 1120 600L1170 590M1195 590L1200 669M1115 612L1128 635M1128 610L1115 640',
      'M1322 750L1375 725M1322 800L1370 760M1325 750V790M1320 990L1375 960M1280 1055L1370 1015M1320 850L1310 1000M1530 740Q1568 720 1568 800M1545 800Q1560 790 1568 810',
      'M0 1085L30 1090Q35 1100 15 1133M70 1133L95 1095M110 1133C115 1080 160 1080 158 1133M122 1133C125 1100 148 1100 148 1133M175 1091L178 1133M235 1133L240 1091L250 1133L260 1095L268 1133M290 1091L300 1130M580 1091Q615 1150 645 1091M770 1091L780 1133L810 1095M870 1133L885 1091L915 1130L905 1095M1025 1133Q1030 1095 1060 1091Q1080 1095 1088 1133M1140 1091L1150 1110L1230 1091M1260 1133L1275 1110L1290 1133M1500 1091L1505 1133M1520 1085L1525 1133M1540 1110L1550 1133M1555 1080L1568 1100',
    ],
  },
];

const Doodles = () => (
  <Wallpaper viewBox="0 264 1080 1944" preserveAspectRatio="xMidYMin slice" fill="none" stroke={color.doodle} strokeWidth="2.600" strokeLinecap="round" strokeLinejoin="round" aria-hidden>
    {sheets.map(s => (
      <g key={s.at} transform={s.at}>
        {s.paths.map(d => <path key={d} d={d} vectorEffect="non-scaling-stroke" />)}
      </g>
    ))}
    {smallDots.map(([x, y]) => <circle key={`s${x}-${y}`} cx={x} cy={y} r="6" />)}
    {mediumDots.map(([x, y]) => <circle key={`m${x}-${y}`} cx={x} cy={y} r="9.500" />)}
    {largeDots.map(([x, y]) => <circle key={`l${x}-${y}`} cx={x} cy={y} r="13" />)}
  </Wallpaper>
);

const PhoneStatus = () => (
  <StatusBar>
    <StatusGroup $gap={16}>
      <Clock>3:06</Clock>
      <svg width="36" height="36" viewBox="0 0 36 36" aria-hidden>
        <rect width="36" height="36" rx="9" fill="#3b8ae6" />
        <rect x="11" y="6" width="19" height="18" rx="5" fill="#a9c7fb" />
        <path d="M6 15Q6 11 10 11H21Q25 11 25 15V25Q25 29 21 29H6Z" fill="#fff" />
      </svg>
      <svg width="36" height="36" viewBox="0 0 36 36" aria-hidden>
        <path d="M18 0A18 18 0 1 1 14 36H5V31A18 18 0 0 1 18 0Z" fill="#fff" />
        <circle cx="12" cy="18" r="1.800" fill="#0b1014" /><circle cx="18" cy="18" r="1.800" fill="#0b1014" /><circle cx="25" cy="18" r="1.800" fill="#0b1014" />
      </svg>
      <svg width="36" height="36" viewBox="0 0 36 36" fill="none" stroke="#fff" strokeWidth="6" strokeLinecap="round" aria-hidden>
        <path d="M10 6A15 15 0 1 0 31 25" />
        <path d="M18 3Q25 3 29 8Q33 12 33 18M19 18L28 9" />
      </svg>
      <svg width="64" height="12" viewBox="0 0 64 12" aria-hidden>
        <circle cx="25" cy="6" r="6" fill="#fff" />
      </svg>
    </StatusGroup>
    <StatusGroup $gap={16}>
      <Stack $top={24} $bottom={18}><span>0.33</span><span>KB/S</span></Stack>
      <Stack $top={20} $bottom={15}><span>Vo</span><span>LTED</span></Stack>
      <svg width="58" height="40" viewBox="0 -4 58 40" aria-label="4G signal" role="img">
        <path d="M2 7L6 3L10 7M2 11L6 15L10 11" fill="none" stroke="#3b4144" strokeWidth="3" />
        <text x="13" y="16" fill="#fff" fontFamily="Roboto" fontWeight="500" fontSize="19">4G</text>
        <rect x="19" y="22" width="5" height="9" rx="1" fill="#fff" />
        <rect x="30" y="19" width="5" height="12" rx="1" fill="#fff" />
        <rect x="41" y="11" width="5" height="20" rx="1" fill="#3b4144" />
        <rect x="52" y="1" width="5" height="30" rx="1" fill="#3b4144" />
      </svg>
      <svg width="40" height="32" viewBox="0 0 40 32" aria-label="No signal" role="img">
        <path d="M2 5L12 15M12 5L2 15" fill="none" stroke="#fff" strokeWidth="3.500" />
        <rect x="1" y="22" width="5" height="9" rx="1" fill="#3b4144" />
        <rect x="12" y="19" width="5" height="12" rx="1" fill="#3b4144" />
        <rect x="23" y="11" width="5" height="20" rx="1" fill="#3b4144" />
        <rect x="34" y="1" width="5" height="30" rx="1" fill="#3b4144" />
      </svg>
      <svg width="59" height="30" viewBox="0 0 59 30" aria-label="Battery 77" role="img">
        <rect x="5" y="5" width="36" height="20" rx="3" fill="#2b3034" />
        <rect x="1.500" y="1.500" width="51" height="27" rx="8" fill="none" stroke="#fff" strokeWidth="3" />
        <path d="M57.500 11V19" stroke="#fff" strokeWidth="3" />
        <text x="27" y="22" fill="#e6e8ea" fontFamily="Roboto" fontSize="21" textAnchor="middle">77</text>
      </svg>
    </StatusGroup>
  </StatusBar>
);

const ChatHeader = () => (
  <Header>
    <IconButton aria-label="Back">
      <svg width="72" height="72" viewBox="0 0 24 24" fill={color.text}><path d="M20 11H7.830l5.590-5.590L12 4l-8 8 8 8 1.410-1.410L7.830 13H20v-2z" /></svg>
    </IconButton>
    <Avatar>T</Avatar>
    <Title>+1 (555) 163-6089</Title>
    <HeaderActions>
      <IconButton aria-label="Call">
        <svg width="72" height="72" viewBox="0 0 24 24" fill={color.text}><path d="M6.540 5c.06.89.21 1.760.45 2.590l-1.200 1.200c-.41-1.200-.67-2.470-.76-3.790h1.510m9.860 12.020c.85.24 1.720.39 2.600.45v1.490c-1.320-.09-2.590-.35-3.800-.75l1.200-1.190M7.500 3H4c-.55 0-1 .45-1 1 0 9.390 7.610 17 17 17 .55 0 1-.45 1-1v-3.490c0-.55-.45-1-1-1-1.240 0-2.450-.2-3.570-.57-.1-.04-.21-.05-.31-.05-.26 0-.51.1-.71.29l-2.200 2.200c-2.830-1.450-5.150-3.760-6.590-6.590l2.200-2.200c.28-.28.36-.67.25-1.020C8.700 6.450 8.500 5.250 8.500 4c0-.55-.45-1-1-1z" /></svg>
      </IconButton>
      <IconButton aria-label="More options">
        <svg width="72" height="72" viewBox="0 0 72 72" fill={color.text}><circle cx="36" cy="18" r="6" /><circle cx="36" cy="36" r="6" /><circle cx="36" cy="54" r="6" /></svg>
      </IconButton>
    </HeaderActions>
  </Header>
);

const ReceivedMessage = ({ time, wide, children }: { time: string; wide?: boolean; children: React.ReactNode }) => (
  <Bubble $wide={wide}>
    <Tail />
    <Received>
      <Text $space={10}>{children}</Text>
      <Meta><time>{time}</time></Meta>
    </Received>
  </Bubble>
);

const SentMessage = ({ time, quoted, children }: { time: string; quoted?: boolean; children: React.ReactNode }) => (
  <Bubble $out>
    <Tail out />
    {quoted && (
      <Quote>
        <cite>+1 (555) 163-6089</cite>
        <p><Clipboard /> Please choose an option:</p>
      </Quote>
    )}
    <Sent $tall={quoted}>
      <Text $space={quoted ? 19 : 8}>{children}</Text>
      <Meta><time>{time}</time><Checks /></Meta>
    </Sent>
  </Bubble>
);

export default function App() {
  return (
    <>
      <Global />
      <Page>
        <PhoneStatus />
        <ChatHeader />
        <Chat>
          <Doodles />
          <Messages>
            <ReceivedMessage time="3:04 PM" wide>Debt, 20% Gold.</ReceivedMessage>
            <SentMessage time="3:05 PM" quoted><GreenChart /> Fund Updates</SentMessage>
            <ReceivedMessage time="3:05 PM"><GreenChart /> NAV for Axis Bluechip Fund: ₹102.45 (today)</ReceivedMessage>
            <SentMessage time="3:05 PM">Menu</SentMessage>
            <Card>
              <Tail />
              <CardText>
                <Text $space={19}><Clipboard large /> Please choose an option:</Text>
                <Meta><time>3:05 PM</time></Meta>
              </CardText>
              <Option><ReplyArrow /><BarChart />Portfolio</Option>
              <Option><ReplyArrow /><LineChart />Fund Updates</Option>
              <Option><ReplyArrow /><SackFlat />SIP Updates</Option>
            </Card>
            <SentMessage time="3:06 PM" quoted><SackRich /> SIP Updates</SentMessage>
            <ReceivedMessage time="3:06 PM"><SackRich /> Your SIP of ₹5,000 runs on 5th of every month.</ReceivedMessage>
          </Messages>
          <Composer onSubmit={e => e.preventDefault()}>
            <Field>
              <svg width="72" height="72" viewBox="0 0 72 72" fill="none" stroke="currentColor" strokeWidth="6" strokeLinejoin="round" aria-hidden>
                <path d="M25 9H47Q63 9 63 25V43Q54 62 40 63H25Q9 63 9 47V25Q9 9 25 9Z" />
                <path d="M63 39H54Q41 40 40 52V63" strokeWidth="5" />
                <circle cx="25" cy="26" r="5" fill="currentColor" stroke="none" />
                <circle cx="46" cy="26" r="5" fill="currentColor" stroke="none" />
                <path d="M22 40H45Q37 45 36 52Q24 50 22 40Z" fill="currentColor" stroke="none" />
              </svg>
              <FieldInput type="text" aria-label="Message" placeholder="Message" />
              <FieldActions>
                <IconButton type="button" aria-label="Attach">
                  <svg width="72" height="72" viewBox="0 0 72 72" fill="none" stroke="currentColor" strokeWidth="5.500">
                    <path d="M52 18V46A16 16 0 0 1 20 46V19A11.500 11.500 0 0 1 43 19V44A5 5 0 0 1 31 44V18" />
                  </svg>
                </IconButton>
                <IconButton type="button" aria-label="Camera">
                  <svg width="72" height="72" viewBox="0 0 24 24" fill="none" stroke="currentColor" strokeWidth="2">
                    <path d="M4 6H7.600L9.400 4H14.600L16.400 6H20Q21 6 21 7V19Q21 20 20 20H4Q3 20 3 19V7Q3 6 4 6Z" />
                    <circle cx="12" cy="13" r="3.500" />
                  </svg>
                </IconButton>
              </FieldActions>
            </Field>
            <MicButton type="button" aria-label="Record voice message">
              <svg width="72" height="72" viewBox="0 0 24 24" fill={color.page}><path d="M12 14c1.660 0 3-1.340 3-3V5c0-1.660-1.340-3-3-3S9 3.340 9 5v6c0 1.660 1.340 3 3 3zm5-3c0 2.760-2.240 5-5 5s-5-2.240-5-5H5c0 3.530 2.610 6.430 6 6.920V21h2v-3.080c3.390-.49 6-3.390 6-6.920h-2z" /></svg>
            </MicButton>
          </Composer>
        </Chat>
        <SystemNav>
          <IconButton aria-label="Recent apps">
            <svg width="36" height="36" viewBox="0 0 36 36" stroke={color.nav} strokeWidth="3"><path d="M0 1.500H36M0 18H36M0 34.500H36" /></svg>
          </IconButton>
          <IconButton aria-label="Home">
            <svg width="36" height="36" viewBox="0 0 36 36" fill="none" stroke={color.nav} strokeWidth="2.600"><rect x="1.300" y="1.300" width="33.400" height="33.400" rx="8" /></svg>
          </IconButton>
          <IconButton aria-label="Back">
            <svg width="36" height="36" viewBox="0 0 36 36" fill="none" stroke={color.nav} strokeWidth="2.600" strokeLinejoin="round"><path d="M31 2L2.500 15.500Q0 18 2.500 20.500L31 34Q34 34 34 31V5Q34 2 31 2Z" /></svg>
          </IconButton>
          <AccessButton aria-label="Accessibility">
            <svg width="38" height="48" viewBox="0 0 38 48" fill="#7d8184"><circle cx="19" cy="5.500" r="5.500" /><path d="M2 10Q19 18 36 10L38 15Q34 19 26 20V48H21V37H17V48H12V20Q4 19 0 15Z" /></svg>
          </AccessButton>
        </SystemNav>
      </Page>
    </>
  );
}
